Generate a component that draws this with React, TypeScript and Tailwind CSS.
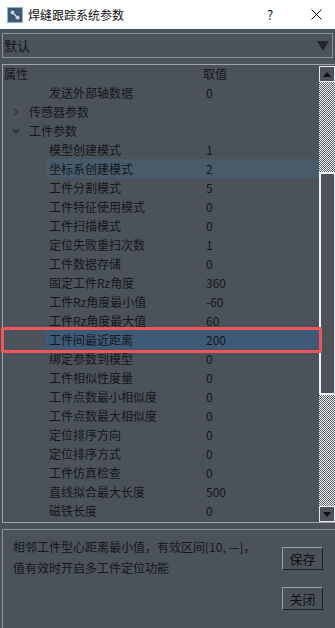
import React from 'react';

type Row = {
  label: string;
  value?: string;
  group?: 'open' | 'closed';
  state?: 'hover' | 'selected';
};

const rows: Row[] = [
  { label: '发送外部轴数据', value: '0' },
  { label: '传感器参数', group: 'closed' },
  { label: '工件参数', group: 'open' },
  { label: '模型创建模式', value: '1' },
  { label: '坐标系创建模式', value: '2', state: 'hover' },
  { label: '工件分割模式', value: '5' },
  { label: '工件特征使用模式', value: '0' },
  { label: '工件扫描模式', value: '0' },
  { label: '定位失败重扫次数', value: '1' },
  { label: '工件数据存储', value: '0' },
  { label: '固定工件Rz角度', value: '360' },
  { label: '工件Rz角度最小值', value: '-60' },
  { label: '工件Rz角度最大值', value: '60' },
  { label: '工件间最近距离', value: '200', state: 'selected' },
  { label: '绑定参数到模型', value: '0' },
  { label: '工件相似性度量', value: '0' },
  { label: '工件点数最小相似度', value: '0' },
  { label: '工件点数最大相似度', value: '0' },
  { label: '定位排序方向', value: '0' },
  { label: '定位排序方式', value: '0' },
  { label: '工件仿真检查', value: '0' },
  { label: '直线拟合最大长度', value: '500' },
  { label: '磁铁长度', value: '0' },
];

const AppIcon = () => (
  <svg width="16" height="16" viewBox="0 0 16 16">
    <rect x="0.5" y="0.5" width="15" height="15" fill="#3f5a78" stroke="#8fb4dc" />
    <circle cx="5.5" cy="5.5" r="2.6" fill="#c9d3de" stroke="#22303f" strokeWidth="0.8" />
    <circle cx="10.5" cy="10.5" r="2.6" fill="#c9d3de" stroke="#22303f" strokeWidth="0.8" />
    <path d="M7 7 L9 9" stroke="#e6edf5" strokeWidth="1.2" />
  </svg>
);

const Chevron = ({ open }: { open: boolean }) => (
  <svg width="8" height="8" viewBox="0 0 8 8" className="shrink-0">
    {open ? (
      <path d="M1 2.5 L4 5.5 L7 2.5" fill="none" stroke="#23282d" strokeWidth="1.3" />
    ) : (
      <path d="M2.5 1 L5.5 4 L2.5 7" fill="none" stroke="#2f353b" strokeWidth="1.3" />
    )}
  </svg>
);

const ScrollButton = ({ up }: { up: boolean }) => (
  <div className="h-[16px] w-[16px] border border-[#e8ebee] bg-[#4b5259] flex items-center justify-center">
    <svg width="8" height="5" viewBox="0 0 8 5">
      {up ? <path d="M0 5 L4 0 L8 5 Z" fill="#0f1114" /> : <path d="M0 0 L4 5 L8 0 Z" fill="#0f1114" />}
    </svg>
  </div>
);

const Track = ({ h }: { h: string }) => (
  <div
    className={`${h} w-[16px] [background:repeating-conic-gradient(#f2f2f2_0%_25%,#5a6168_0%_50%)_0_0/2px_2px]`}
  />
);

const TreeRow = ({ row }: { row: Row }) => {
  if (row.group) {
    return (
      <div className="h-[19px] flex items-center">
        <div className="w-[26px] pl-[9px] flex items-center">
          <Chevron open={row.group === 'open'} />
        </div>
        <span>{row.label}</span>
      </div>
    );
  }
  return (
    <div className="h-[19px] flex items-center relative">
      <div className="w-[43px] shrink-0" />
      <div
        className={
          'flex-1 h-full flex items-center ' +
          (row.state === 'selected' ? 'bg-[#3d5a76]' : row.state === 'hover' ? 'bg-[#475b6b]' : '')
        }
      >
        <span className="w-[160px] pl-[3px] shrink-0">{row.label}</span>
        <span>{row.value}</span>
      </div>
      {row.state === 'selected' && (
        <div className="absolute left-[-2px] right-[-3px] top-[-3px] bottom-[-4px] border-[3px] border-[#f0555b] rounded-[2px]" />
      )}
    </div>
  );
};

const RaisedButton = ({ label }: { label: string }) => (
  <button className="w-[41px] h-[23px] bg-[#4b5259] border border-t-[#9aa0a6] border-l-[#9aa0a6] border-b-[#1e2226] border-r-[#1e2226] text-[13px] text-[#111] leading-none">
    {label}
  </button>
);

export default function App() {
  return (
    <div className="w-[335px] h-[628px] bg-[#4b5259] flex flex-col overflow-hidden text-[12px] text-[#15181b] font-['Noto_Sans_CJK_SC','Noto_Sans',sans-serif] leading-none">
      <div className="h-[29px] bg-white flex items-center pl-[7px] text-[#111]">
        <AppIcon />
        <span className="ml-[5px] text-[12px]">焊缝跟踪系统参数</span>
        <span className="ml-auto text-[13px] w-[10px]">?</span>
        <svg width="11" height="11" viewBox="0 0 11 11" className="ml-[34px] mr-[13px]">
          <path d="M0.5 0.5 L10.5 10.5 M10.5 0.5 L0.5 10.5" stroke="#111" strokeWidth="1" />
        </svg>
      </div>

      <div className="mt-[4px] mx-[2px] h-[25px] border border-[#8b9298] flex items-center justify-between pl-[1px] pr-[3px]">
        <span className="text-[13px]">默认</span>
        <svg width="12" height="10" viewBox="0 0 12 10">
          <path d="M0 0 L12 0 L6 10 Z" fill="#23272b" />
        </svg>
      </div>

      <div className="mt-[6px] ml-[2px] w-[333px] h-[459px] border-t border-l border-b border-[#9ea3a8] flex">
        <div className="flex-1 flex flex-col">
          <div className="h-[18px] flex items-center">
            <span className="w-[200px] pl-[1px]">属性</span>
            <span>取值</span>
          </div>
          {rows.map((r) => (
            <TreeRow key={r.label} row={r} />
          ))}
        </div>
        <div className="w-[16px] flex flex-col pt-[1px]">
          <ScrollButton up />
          <Track h="h-[90px]" />
          <div className="h-[223px] w-[16px] border-2 border-r border-[#eef0f2] bg-[#4b5259]" />
          <Track h="h-[111px]" />
          <ScrollButton up={false} />
        </div>
      </div>

      <div className="mt-[6px] ml-[2px] flex-1 border-t border-l border-[#8b9298] flex">
        <div className="flex-1 pl-[10px] pt-[6px] text-[12px] leading-[21px]">
          <div>相邻工件型心距离最小值，有效区间[10, —]，</div>
          <div>值有效时开启多工件定位功能</div>
        </div>
        <div className="w-[53px] pt-[17px] flex flex-col gap-[17px]">
          <RaisedButton label="保存" />
          <RaisedButton label="关闭" />
        </div>
      </div>
    </div>
  );
}
